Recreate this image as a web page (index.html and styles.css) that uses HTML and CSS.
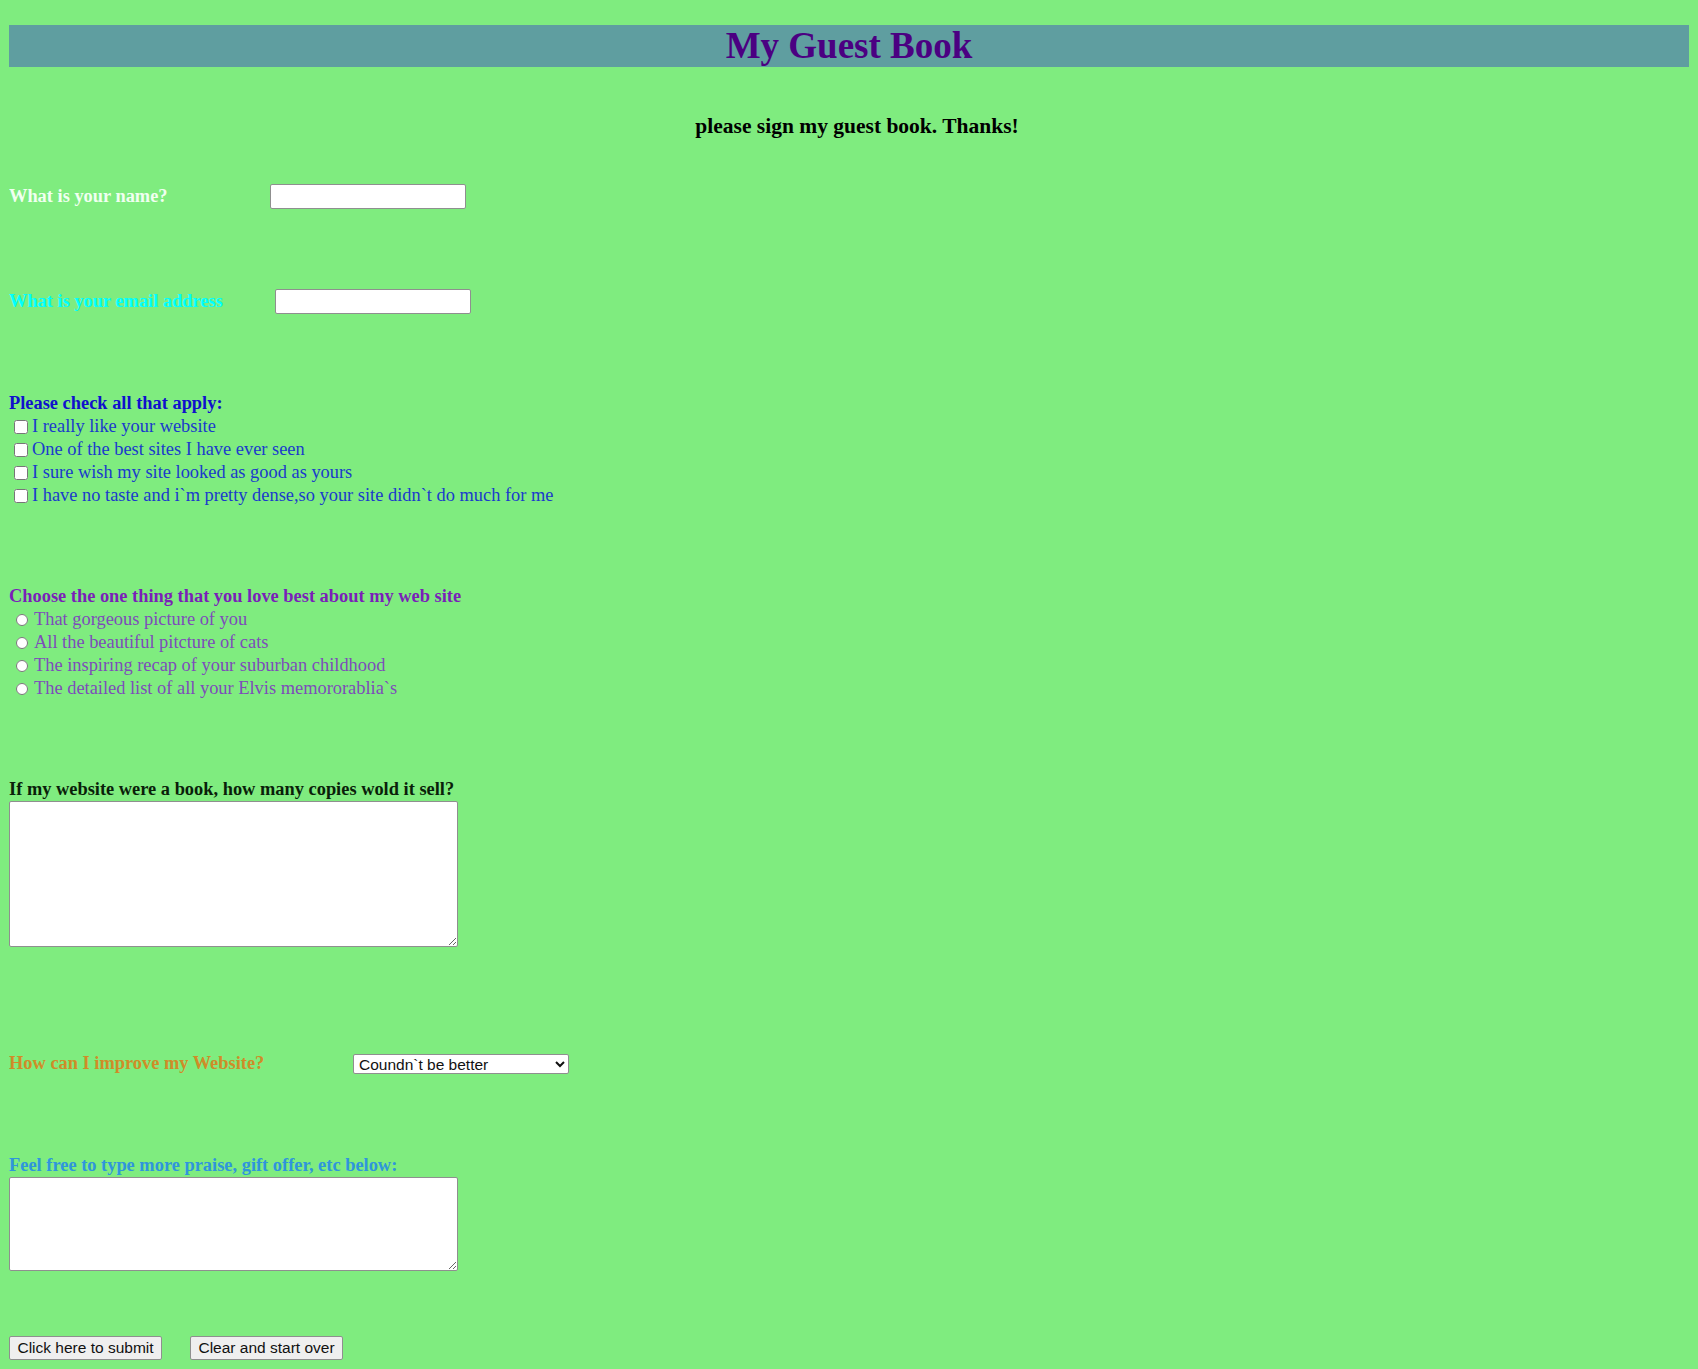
FILE: index.html
```html
<!DOCTYPE html>
<html lang="en">
<head>
<meta charset="utf-8">
<title>My Guest Book</title>
<link rel="stylesheet" href="styles.css">
</head>
<body>
<h1 class="banner">My Guest Book</h1>
<h3 class="intro">please sign my guest book. Thanks!</h3>
<form class="guest-form">
  <div class="row row-name">
    <label class="lbl lbl-name" for="name">What is your name?</label>
    <input class="text-input" type="text" id="name">
  </div>
  <div class="row row-email">
    <label class="lbl lbl-email" for="email">What is your email address</label>
    <input class="text-input" type="text" id="email">
  </div>

  <div class="group group-check">
    <div class="lbl group-title">Please check all that apply:</div>
    <label class="opt"><input type="checkbox" class="chk">I really like your website</label>
    <label class="opt"><input type="checkbox" class="chk">One of the best sites I have ever seen</label>
    <label class="opt"><input type="checkbox" class="chk">I sure wish my site looked as good as yours</label>
    <label class="opt"><input type="checkbox" class="chk">I have no taste and i`m pretty dense,so your site didn`t do much for me</label>
  </div>

  <div class="group group-radio">
    <div class="lbl group-title">Choose the one thing that you love best about my web site</div>
    <label class="opt"><input type="radio" name="best" class="rad">That gorgeous picture of you</label>
    <label class="opt"><input type="radio" name="best" class="rad">All the beautiful pitcture of cats</label>
    <label class="opt"><input type="radio" name="best" class="rad">The inspiring recap of your suburban childhood</label>
    <label class="opt"><input type="radio" name="best" class="rad">The detailed list of all your Elvis memororablia`s</label>
  </div>

  <div class="group group-copies">
    <div class="lbl group-title">If my website were a book, how many copies wold it sell?</div>
    <textarea class="area area-big"></textarea>
  </div>

  <div class="row row-improve">
    <label class="lbl lbl-improve" for="improve">How can I improve my Website?</label>
    <select class="sel" id="improve">
      <option>Coundn`t be better</option>
      <option>More pictures of cats</option>
      <option>More about Elvis</option>
    </select>
  </div>

  <div class="group group-praise">
    <div class="lbl group-title">Feel free to type more praise, gift offer, etc below:</div>
    <textarea class="area area-small"></textarea>
  </div>

  <div class="buttons">
    <button type="submit" class="btn">Click here to submit</button>
    <button type="reset" class="btn">Clear and start over</button>
  </div>
</form>
</body>
</html>
```

FILE: styles.css
```css
html, body {
  background: #7fec7f;
}
body {
  margin: 0 9px;
  padding: 25px 0 8px;
  font-family: "Liberation Serif", "Times New Roman", serif;
  font-size: 18.4px;
  color: #000;
}
.banner {
  margin: 0;
  height: 42px;
  line-height: 42px;
  background: #5f9ea0;
  color: #4b0082;
  text-align: center;
  font-size: 37px;
  font-weight: bold;
}
.intro {
  margin: 47px 0 0;
  padding-left: 16px;
  height: 25px;
  line-height: 25px;
  text-align: center;
  font-size: 21.5px;
  font-weight: bold;
}
.guest-form {
  margin: 0;
}
.row {
  display: flex;
  align-items: center;
}
.lbl {
  font-weight: bold;
  line-height: 23px;
}
.row-name {
  margin-top: 45px;
  height: 25px;
}
.lbl-name {
  width: 261px;
  color: #f0fff0;
}
.row-email {
  margin-top: 80px;
  height: 25px;
}
.lbl-email {
  width: 266px;
  color: #00ffff;
}
.text-input {
  box-sizing: border-box;
  width: 196px;
  height: 25px;
  margin: 0;
  padding: 1px 3px;
  border: 1px solid #8f8f8f;
  border-radius: 2px;
  background: #fff;
  font-family: "Liberation Sans", Arial, sans-serif;
  font-size: 15px;
}
.group {
  display: flex;
  flex-direction: column;
  align-items: flex-start;
}
.group-check {
  margin-top: 78px;
  color: #1a3acc;
}
.group-check .group-title {
  color: #1010cd;
}
.group-radio {
  margin-top: 78px;
  color: #7d4cba;
}
.group-radio .group-title {
  color: #7a1fb8;
}
.group-copies {
  margin-top: 78px;
  color: #0a1f0a;
}
.opt {
  display: flex;
  align-items: center;
  height: 23px;
  line-height: 23px;
}
.chk {
  width: 14px;
  height: 14px;
  margin: 0 4px 0 5px;
}
.rad {
  width: 12px;
  height: 12px;
  margin: 0 6px 0 7px;
}
.area {
  box-sizing: border-box;
  width: 449px;
  margin: 0;
  border: 1px solid #8f8f8f;
  border-radius: 2px;
  background: #fff;
  font-family: "Liberation Mono", monospace;
  font-size: 14px;
}
.area-big {
  height: 146px;
}
.row-improve {
  margin-top: 105px;
  height: 23px;
}
.lbl-improve {
  width: 344px;
  color: #cf8c28;
}
.sel {
  box-sizing: border-box;
  width: 216px;
  height: 20px;
  margin: 0;
  padding: 0 1px;
  border: 1px solid #8f8f8f;
  border-radius: 2px;
  background: #fff;
  color: #111;
  font-family: "Liberation Sans", Arial, sans-serif;
  font-size: 15.5px;
}
.group-praise {
  margin-top: 79px;
  color: #2f95dc;
}
.area-small {
  height: 94px;
}
.buttons {
  display: flex;
  gap: 28px;
  margin-top: 65px;
}
.btn {
  box-sizing: border-box;
  width: 153px;
  height: 24px;
  margin: 0;
  padding: 0;
  border: 1px solid #8f8f8f;
  border-radius: 2px;
  background: #efefef;
  color: #111;
  font-family: "Liberation Sans", Arial, sans-serif;
  font-size: 15.5px;
}
```
